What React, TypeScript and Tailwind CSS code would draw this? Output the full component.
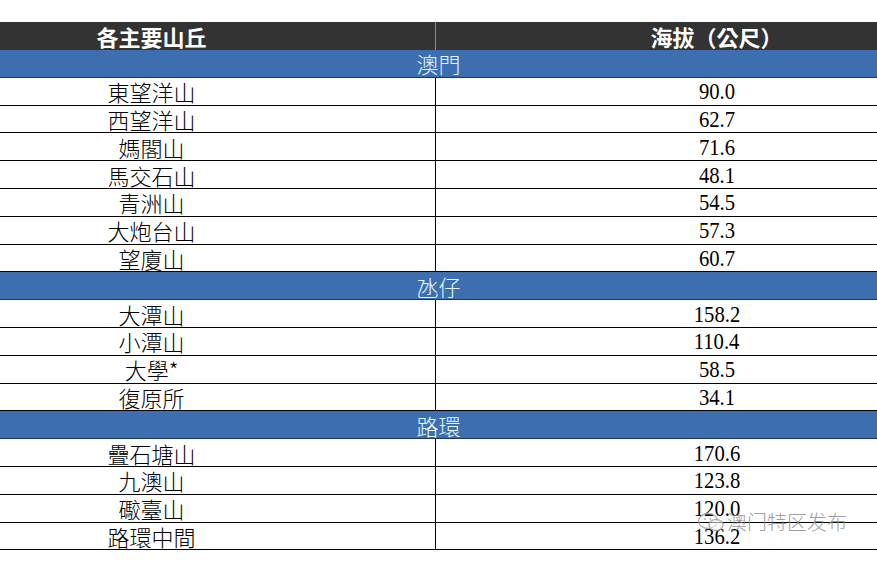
import React from 'react';

type Row = { name: string; height: string };
type Section = { title: string; rows: Row[] };

const sections: Section[] = [
  {
    title: '澳門',
    rows: [
      { name: '東望洋山', height: '90.0' },
      { name: '西望洋山', height: '62.7' },
      { name: '媽閣山', height: '71.6' },
      { name: '馬交石山', height: '48.1' },
      { name: '青洲山', height: '54.5' },
      { name: '大炮台山', height: '57.3' },
      { name: '望廈山', height: '60.7' },
    ],
  },
  {
    title: '氹仔',
    rows: [
      { name: '大潭山', height: '158.2' },
      { name: '小潭山', height: '110.4' },
      { name: '大學*', height: '58.5' },
      { name: '復原所', height: '34.1' },
    ],
  },
  {
    title: '路環',
    rows: [
      { name: '疊石塘山', height: '170.6' },
      { name: '九澳山', height: '123.8' },
      { name: '礮臺山', height: '120.0' },
      { name: '路環中間', height: '136.2' },
    ],
  },
];

const cjk = "font-['Noto_Sans_CJK_TC','Noto_Sans_CJK_SC',sans-serif]";

// WeChat style watermark bubbles
const BubbleIcon = () => (
  <svg width="28" height="22" viewBox="0 0 28 22" fill="none" aria-hidden="true">
    <ellipse cx="11" cy="10" rx="9.5" ry="7.5" stroke="#a0a0a0" strokeWidth="1.3" />
    <ellipse cx="19" cy="14" rx="7" ry="5.5" stroke="#a0a0a0" strokeWidth="1.3" fill="white" fillOpacity="0.6" />
    <circle cx="8" cy="8" r="0.9" fill="#a0a0a0" />
    <circle cx="13.5" cy="8" r="0.9" fill="#a0a0a0" />
  </svg>
);

export default function App() {
  return (
    <div className="relative h-[563px] w-[877px] overflow-hidden bg-white">
      <div className="h-[22px]" />
      {/* Header */}
      <div className={`flex h-[28px] bg-[#333333] text-[22px] font-bold leading-none text-white ${cjk}`}>
        <div className="flex w-[436px] items-center justify-center border-r border-[#8a8a8a] pr-[132px]">
          各主要山丘
        </div>
        <div className="flex flex-1 items-center justify-center pl-[120px]">海拔（公尺）</div>
      </div>

      {sections.map((s) => (
        <div key={s.title}>
          <div
            className={`flex h-[27.8px] items-center justify-center border-b border-[#1f3550] bg-[#3d6fb0] text-[22px] font-light leading-none text-[#e4f6ff] ${cjk}`}
          >
            {s.title}
          </div>
          {s.rows.map((r) => (
            <div key={r.name} className="flex h-[27.8px] border-b border-black text-black">
              <div
                className={`flex w-[436px] items-center justify-center border-r border-black pr-[132px] text-[22px] font-light leading-none ${cjk}`}
              >
                {r.name}
              </div>
              <div className="flex flex-1 items-center justify-center pl-[120px]">
                <span className="inline-block scale-x-[0.86] font-['Liberation_Serif',serif] text-[24px] leading-none">
                  {r.height}
                </span>
              </div>
            </div>
          ))}
        </div>
      ))}

      {/* Watermark */}
      <div className="absolute left-[697px] top-[511px] flex items-center gap-[2px] opacity-85">
        <BubbleIcon />
        <span className={`text-[20px] font-light leading-none text-[#8f8f8f] ${cjk}`}>澳门特区发布</span>
      </div>
    </div>
  );
}
